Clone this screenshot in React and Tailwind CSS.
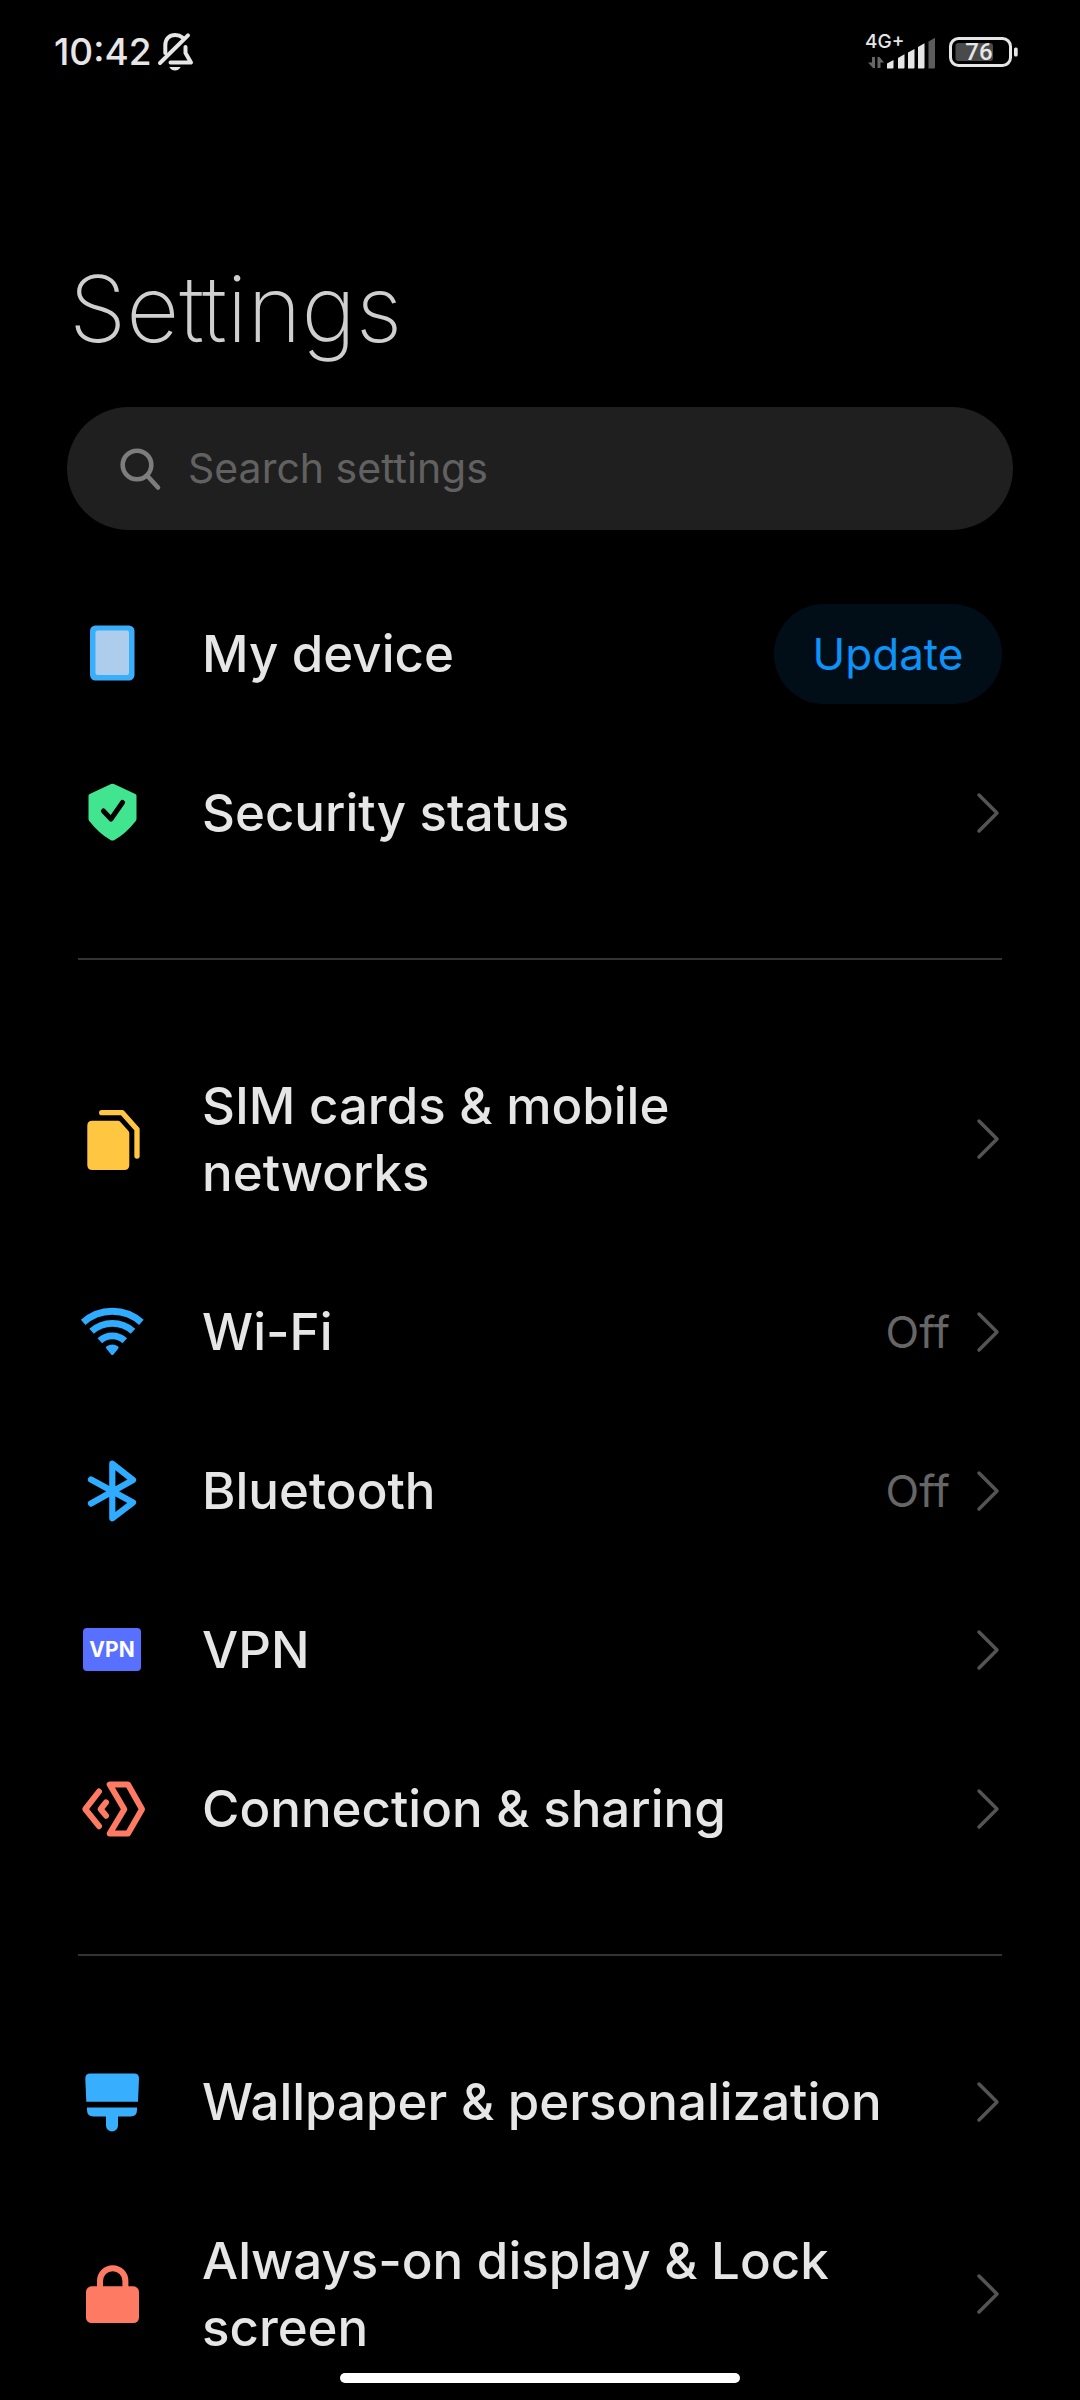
import { useState } from "react";

const DeviceIcon = () => (
  <svg viewBox="0 0 68 68" className="size-full">
    <rect x="12" y="5.5" width="44.5" height="55" rx="5.5" fill="#39aefb" />
    <rect x="17.5" y="10.5" width="33.5" height="44.5" rx="2" fill="#aecdec" />
  </svg>
);

const ShieldIcon = () => (
  <svg viewBox="0 0 68 68" className="size-full">
    <path
      d="M33.1 5.1q1.4-.9 2.8 0L57.3 15q1.2.6 1.2 1.8V40q0 1.2-1 2.2Q48 54.5 36.5 61q-2 1-4 0Q21 54.5 11.5 42.2q-1-1-1-2.2V16.8Q10.5 15.6 11.7 15Z"
      fill="#42e58f"
    />
    <path
      d="M25.4 32L33 40L44.5 23.5"
      fill="none"
      stroke="#000"
      strokeWidth="5"
      strokeLinecap="round"
      strokeLinejoin="round"
    />
  </svg>
);

const SimIcon = () => (
  <svg viewBox="0 0 68 68" className="size-full" fill="#ffc642">
    <path d="M14.3 15.7H40q1.3 0 2.2 1L50.5 26q.8 1 .8 2.3V60q0 5-5 5H14.3q-5 0-5-5V20.7q0-5 5-5Z" />
    <path
      d="M23.7 7.7H44.3L59 24.3V51"
      fill="none"
      stroke="#ffc642"
      strokeWidth="5.3"
      strokeLinecap="round"
      strokeLinejoin="round"
    />
  </svg>
);

const WifiIcon = () => (
  <svg viewBox="0 0 68 68" className="size-full" fill="none" stroke="#2fabff" strokeWidth="6.8" strokeLinejoin="round">
    <path d="M5.2 24.4A43.5 43.5 0 0 1 63.4 24.4" />
    <path d="M13.6 33.3A31 31 0 0 1 55 33.3" />
    <path d="M21.8 42.8A18.5 18.5 0 0 1 46.8 42.8" />
    <path d="M29.5 49.5Q34.3 46.5 39.1 49.5L34.3 55.5Z" fill="#2fabff" strokeWidth="3" />
  </svg>
);

const BluetoothIcon = () => (
  <svg viewBox="0 0 68 68" className="size-full">
    <path
      d="M13 22.5L55 45.5L34.3 61.3V6.7L55 23L13 46.5"
      fill="none"
      stroke="#2fabff"
      strokeWidth="6.2"
      strokeLinecap="round"
      strokeLinejoin="round"
    />
  </svg>
);

const VpnIcon = () => (
  <span className="flex h-[43px] w-[58px] items-center justify-center rounded-sm bg-[#5870ff] text-[21px] font-bold text-white">
    VPN
  </span>
);

const ShareIcon = () => (
  <svg
    viewBox="0 0 68 68"
    className="size-full"
    fill="none"
    stroke="#ff7a62"
    strokeWidth="6"
    strokeLinecap="round"
    strokeLinejoin="round"
  >
    <path d="M31.7 9.5H50L64 34.2L50 58.5H31.7L46.3 34.2Z" />
    <path d="M21 16.5L7.3 34.2L21 51.2" />
    <path d="M28 27.4L22.6 34.2L28 40.7" />
  </svg>
);

const BrushIcon = () => (
  <svg viewBox="0 0 68 68" className="size-full" fill="#38aeff">
    <path d="M12.5 5.5H56q5.2 0 5 5.2L60 33.8H8.3L7.3 10.7Q7.1 5.5 12.5 5.5Z" />
    <path d="M9 39.5H59V42q0 6.5-6.5 6.5H40V57.5a6 6 0 0 1-12 0V48.5H15.5Q9 48.5 9 42Z" />
  </svg>
);

const LockIcon = () => (
  <svg viewBox="0 0 68 68" className="size-full">
    <rect x="8" y="26.3" width="53" height="36.7" rx="5.5" fill="#ff7a62" />
    <path d="M22 29V20.9a12.7 12.7 0 0 1 25.4 0V29" fill="none" stroke="#ff7a62" strokeWidth="6" />
  </svg>
);

const Chevron = () => (
  <svg
    viewBox="0 0 28 44"
    className="h-11 w-7 shrink-0"
    fill="none"
    stroke="#545454"
    strokeWidth="3.5"
    strokeLinecap="round"
    strokeLinejoin="round"
  >
    <path d="M5 4L23 22L5 40" />
  </svg>
);

const sections = [
  [
    { label: "My device", Icon: DeviceIcon, action: "Update" },
    { label: "Security status", Icon: ShieldIcon },
  ],
  [
    { label: "SIM cards & mobile networks", Icon: SimIcon },
    { label: "Wi-Fi", Icon: WifiIcon, value: "Off" },
    { label: "Bluetooth", Icon: BluetoothIcon, value: "Off" },
    { label: "VPN", Icon: VpnIcon },
    { label: "Connection & sharing", Icon: ShareIcon },
  ],
  [
    { label: "Wallpaper & personalization", Icon: BrushIcon },
    { label: "Always-on display & Lock screen", Icon: LockIcon },
  ],
];

const StatusBar = () => (
  <header className="flex h-[104px] shrink-0 items-center justify-between pr-[62px] pl-[54px] text-[#e6e6e6]">
    <div className="flex items-center gap-1">
      <span className="text-[37px] font-medium">10:42</span>
      <svg
        viewBox="0 0 38 42"
        className="h-[42px] w-[38px]"
        fill="none"
        stroke="#e6e6e6"
        strokeWidth="4"
        strokeLinecap="round"
        strokeLinejoin="round"
      >
        <path d="M4 32L32 4.3" />
        <path d="M9.3 22V14.5C9.3 7.5 13.5 4 19.3 4Q23.5 4 26.5 6.5" />
        <path d="M29.5 16V22L35 31.5H14.5" />
        <path d="M13.3 36H24.7Q22.5 39.5 19 39.5T13.3 36Z" fill="#e6e6e6" stroke="none" />
      </svg>
    </div>
    <div className="flex items-center gap-3">
      <svg viewBox="0 0 72 42" className="h-[42px] w-[72px] overflow-visible" fill="#e6e6e6">
        <text x="1" y="17" fontSize="19" fontWeight="500">
          4G+
        </text>
        {/* data activity arrows */}
        <path d="M8 26H11V37H9L4 31.5H8Z" fill="#666" />
        <path d="M13.5 37H16.5V31.5H20L15.5 26H13.5Z" fill="#666" />
        <path d="M23 37.5V32.5L29.5 29V36.5q0 1-1 1Z" />
        <path d="M34 37.5V27L40.5 23.3V36.5q0 1-1 1Z" />
        <path d="M44 37.5V21.5L50.5 18V36.5q0 1-1 1Z" />
        <path d="M54 37.5V16L60.5 12.3V36.5q0 1-1 1Z" />
        <path d="M64.5 37.5V10.5L71 6.8V36.5q0 1-1 1Z" fill="#5c5c5c" />
      </svg>
      <svg viewBox="0 0 70 32" className="h-8 w-[70px]">
        <rect x="2.5" y="2.5" width="60" height="27" rx="8" fill="none" stroke="#e6e6e6" strokeWidth="3" />
        <rect x="7.5" y="7" width="37.5" height="18" rx="3" fill="#4a4a4a" />
        <rect x="66" y="11.5" width="3.7" height="9" rx="1.5" fill="#e6e6e6" />
        <text x="31" y="24" fontSize="24" fontWeight="500" textAnchor="middle" fill="#e6e6e6" className="font-['Roboto',sans-serif]">
          76
        </text>
      </svg>
    </div>
  </header>
);

const SettingRow = ({ label, Icon, value, action }) => (
  <li className="flex items-center">
    <a href="#" className="flex flex-1 items-center gap-14">
      <span className="flex size-[68px] shrink-0 items-center justify-center">
        <Icon />
      </span>
      <span className="max-w-[690px] py-[46px] text-[51px] leading-[67px] font-medium">{label}</span>
      {!action && (
        <span className="ml-auto flex items-center gap-6">
          {value && <span className="text-[44px] font-normal text-[#666666]">{value}</span>}
          <Chevron />
        </span>
      )}
    </a>
    {action && (
      <button type="button" className="h-[100px] w-[228px] rounded-full bg-[#010e18] text-[44px] font-normal text-[#0d92f8]">
        {action}
      </button>
    )}
  </li>
);

const App = () => {
  const [query, setQuery] = useState("");

  return (
    <div className="relative flex h-screen flex-col overflow-hidden bg-black font-['Inter',sans-serif] text-[#e6e6e6]">
      <StatusBar />

      <main className="min-h-0 flex-1 overflow-hidden">
        <h1 className="mt-[149px] px-[69px] text-[92px] leading-[112px] font-[250] text-[#cfcfcf]">Settings</h1>

        <label className="mx-[67px] mt-[42px] flex h-[123px] items-center gap-[26px] rounded-full bg-[#1f1f1f] px-[51px]">
          <svg viewBox="0 0 44 44" className="size-11 shrink-0" fill="none" stroke="#7d7d7d" strokeWidth="4.6" strokeLinecap="round">
            <circle cx="19" cy="18" r="14.3" />
            <path d="M29 28.5L40 40.5" />
          </svg>
          <input
            type="text"
            aria-label="Search settings"
            placeholder="Search settings"
            value={query}
            onChange={(e) => setQuery(e.target.value)}
            className="min-w-0 flex-1 bg-transparent text-[41px] outline-none placeholder:text-[#616161]"
          />
        </label>

        <div className="mt-11 px-[78px]">
          {sections.map((rows, index) => (
            <div key={rows[0].label}>
              {index > 0 && <hr className="my-[66px] h-[2px] border-0 bg-[#333333]" />}
              <ul>
                {rows.map((row) => (
                  <SettingRow key={row.label} {...row} />
                ))}
              </ul>
            </div>
          ))}
        </div>
      </main>

      {/* gesture bar */}
      <div className="absolute bottom-[17px] left-1/2 h-[10px] w-[400px] -translate-x-1/2 rounded-full bg-white" />
    </div>
  );
};

export default App;
